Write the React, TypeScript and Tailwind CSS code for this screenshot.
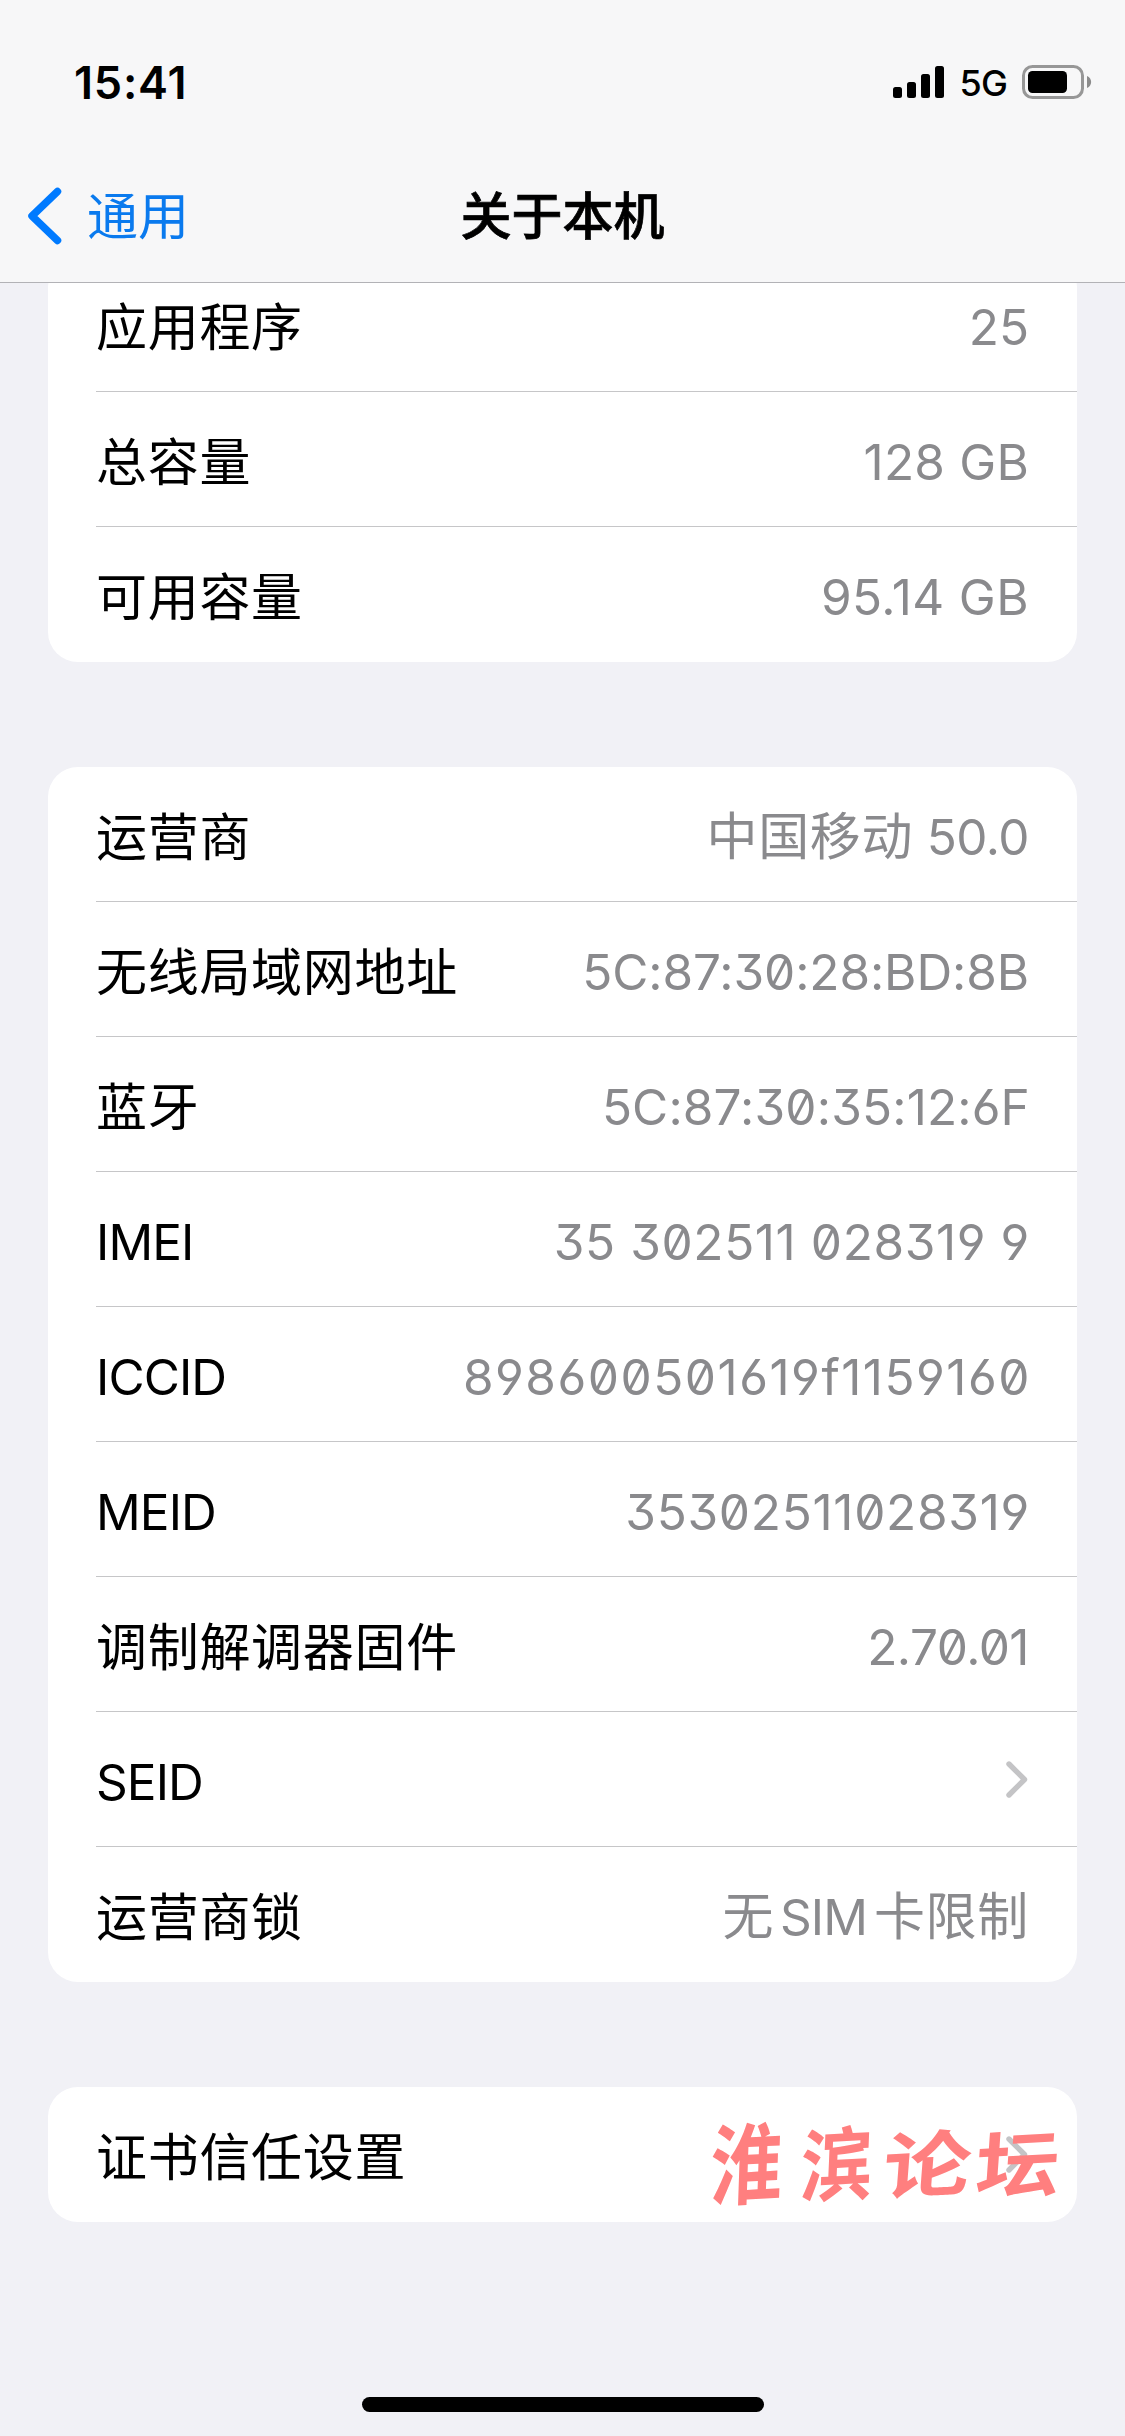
import type { ReactNode } from "react";

type Item = {
  label: string;
  value?: ReactNode;
  // identifiers use slashed zeros and open 6 / 9
  code?: boolean;
  link?: boolean;
  latin?: boolean;
  tracking?: string;
};

const storage: Item[] = [
  { label: "应用程序", value: "25", tracking: "tracking-[0px]" },
  { label: "总容量", value: "128 GB", tracking: "tracking-[0.2px]" },
  { label: "可用容量", value: "95.14 GB", tracking: "tracking-[0.4px]" },
];

const network: Item[] = [
  {
    label: "运营商",
    value: (
      <>
        <span className="text-[51px] tracking-[0.7px]">中国移动</span> 50.0
      </>
    ),
  },
  {
    label: "无线局域网地址",
    value: "5C:87:30:28:BD:8B",
    code: true,
    tracking: "tracking-[-0.1px]",
  },
  {
    label: "蓝牙",
    value: "5C:87:30:35:12:6F",
    code: true,
    tracking: "-mr-px tracking-[0.15px]",
  },
  {
    label: "IMEI",
    value: "35 302511 028319 9",
    code: true,
    latin: true,
    tracking: "-mr-px tracking-[0.6px]",
  },
  {
    label: "ICCID",
    value: "898600501619f1159160",
    code: true,
    latin: true,
    tracking: "-mr-[2px] tracking-[1.5px]",
  },
  {
    label: "MEID",
    value: "35302511028319",
    code: true,
    latin: true,
    tracking: "-mr-px tracking-[0.7px]",
  },
  { label: "调制解调器固件", value: "2.70.01", code: true },
  { label: "SEID", link: true, latin: true },
  {
    label: "运营商锁",
    value: (
      <span className="flex items-baseline text-[51px] tracking-[0.7px]">
        无
        <span className="ml-[6px] mr-[7px] text-[49.5px] tracking-[-1px]">
          SIM
        </span>
        卡限制
      </span>
    ),
  },
];

const certificates: Item[] = [{ label: "证书信任设置", link: true }];

const Chevron = () => (
  <svg width="22" height="37" viewBox="0 0 22 37" fill="none">
    <path
      d="M3 3L18.5 18.5L3 34"
      stroke="#c4c4c6"
      strokeWidth="5.4"
      strokeLinecap="round"
      strokeLinejoin="round"
    />
  </svg>
);

const Row = ({ label, value, code, link, latin, tracking }: Item) => (
  <div className="group pl-12">
    <div className="flex h-[135px] items-center justify-between border-b border-[#c6c6c8] pr-12 group-last:border-b-0">
      <span
        className={
          latin
            ? "pt-[5px] text-[49.5px] tracking-[-0.9px] text-black"
            : "pt-[7px] text-[51px] tracking-[0.7px] text-black"
        }
      >
        {label}
      </span>
      {value && (
        <span
          className={`whitespace-nowrap pt-[5px] text-[49.5px] text-[#8a8a8d] ${
            code ? "[font-feature-settings:'zero','ss01']" : ""
          } ${tracking ?? "tracking-[-0.5px]"}`}
        >
          {value}
        </span>
      )}
      {link && (
        <span className="mr-px">
          <Chevron />
        </span>
      )}
    </div>
  </div>
);

const Card = ({ items }: { items: Item[] }) => (
  <section className="rounded-[30px] bg-white">
    {items.map((item) => (
      <Row key={item.label} {...item} />
    ))}
  </section>
);

const StatusBar = () => (
  <div className="flex h-[164px] items-center justify-between pl-[74px] pr-[33px]">
    <span className="text-[45px] font-semibold leading-none tracking-[0.8px] text-black">
      15:41
    </span>
    <div className="flex items-center">
      <svg width="52" height="32" viewBox="0 0 52 32">
        <rect x="0" y="21" width="9" height="11" rx="2.5" />
        <rect x="14" y="16" width="9" height="16" rx="2.5" />
        <rect x="28" y="8" width="9" height="24" rx="2.5" />
        <rect x="42" y="0" width="9" height="32" rx="2.5" />
      </svg>
      <span className="ml-3.5 mr-[15px] pt-[2px] text-[36px] font-medium leading-none tracking-[-0.8px] text-black">
        5G
      </span>
      <svg width="70" height="34" viewBox="0 0 70 34">
        <rect
          x="1.5"
          y="1.5"
          width="59"
          height="31"
          rx="9"
          fill="none"
          stroke="#979797"
          strokeWidth="3"
        />
        <rect x="6" y="6" width="39" height="22" rx="4.5" />
        <path d="M65 11C70.500 13 70.500 21 65 23Z" fill="#8c8c8c" />
      </svg>
    </div>
  </div>
);

const NavBar = () => (
  <div className="grid h-[104px] grid-cols-3 items-center pl-[27px] pr-[27px]">
    <div className="flex items-center text-[51px] text-[#0a7aee]">
      <svg width="35" height="58" viewBox="0 0 35 58" fill="none">
        <path
          d="M30.500 4.500L5 29L30.500 53.500"
          stroke="#007aff"
          strokeWidth="7.500"
          strokeLinecap="round"
          strokeLinejoin="round"
        />
      </svg>
      <span className="ml-[25px] pt-[2px]">通用</span>
    </div>
    <h1 className="pt-[2px] text-center text-[51px] font-medium text-black [-webkit-text-stroke:0.7px_black]">
      关于本机
    </h1>
  </div>
);

const App = () => {
  return (
    <div className="relative flex h-[2436px] w-[1125px] flex-col overflow-hidden bg-[#f1f1f6] font-['Inter','Noto_Sans_CJK_SC',sans-serif] leading-[60px]">
      <header className="relative z-10 h-[283px] shrink-0 border-b border-[#b2b2b6] bg-[#f7f7f8]">
        <StatusBar />
        <NavBar />
      </header>

      {/* The list is scrolled a little way under the header */}
      <main className="-mt-[26px] flex grow flex-col gap-[105px] px-12">
        <Card items={storage} />
        <Card items={network} />
        <div className="relative">
          <Card items={certificates} />
          {/* Forum watermark */}
          <div className="absolute left-[658px] top-[28px] flex text-[80px] font-bold leading-[100px] text-[#ff7f7f]">
            <span className="w-[90px] -skew-x-6 -rotate-3 scale-x-90 scale-y-110">
              淮
            </span>
            <span className="w-[92px] -skew-x-6 -rotate-3 scale-x-90">滨</span>
            <span className="w-[90px] -skew-x-6 -rotate-3 scale-x-110 scale-y-90">
              论
            </span>
            <span className="w-[90px] -skew-x-6 -rotate-3 scale-x-105 scale-y-90">
              坛
            </span>
          </div>
        </div>
      </main>

      <div className="mb-6 h-[15px] w-[402px] shrink-0 self-center rounded-full bg-black" />
    </div>
  );
};

export default App;
